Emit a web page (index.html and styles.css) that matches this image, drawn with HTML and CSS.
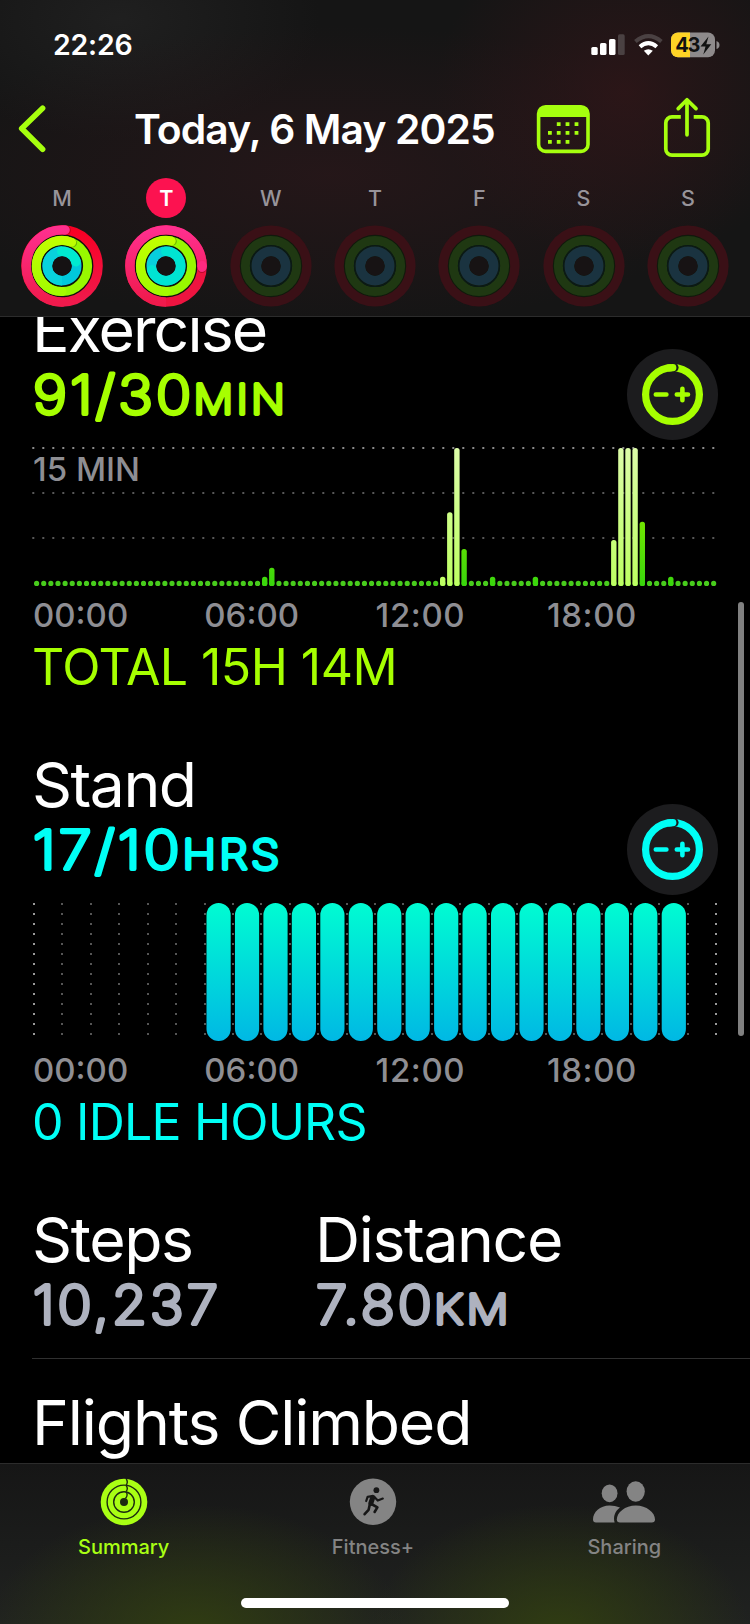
FILE: index.html
```html
<!DOCTYPE html>
<html lang="en">
<head>
<meta charset="utf-8">
<title>Fitness</title>
<link rel="stylesheet" href="styles.css">
</head>
<body>
<svg class="defs" width="0" height="0" aria-hidden="true">
  <defs>
    <linearGradient id="redBase" x1="0" y1="0" x2="0" y2="1"><stop offset="0" stop-color="#f80024"/><stop offset="1" stop-color="#f01a4c"/></linearGradient>
    <linearGradient id="redLap" x1="0" y1="0" x2="0" y2="1"><stop offset="0" stop-color="#ff2f8e"/><stop offset="1" stop-color="#f01a4c"/></linearGradient>
    <linearGradient id="greenLap" x1="0" y1="0" x2="0" y2="1"><stop offset="0" stop-color="#c0ff00"/><stop offset="1" stop-color="#a4fb00"/></linearGradient>
    <g id="dimRings" fill="none">
      <circle cx="41" cy="41" r="40.6" fill="#3a1016"/>
      <circle cx="41" cy="41" r="31.2" fill="#101a0c"/>
      <circle cx="41" cy="41" r="25.6" stroke="#1f3812" stroke-width="9"/>
      <circle cx="41" cy="41" r="20.4" stroke="#0b1a16" stroke-width="1.4"/>
      <circle cx="41" cy="41" r="14.6" stroke="#1a3340" stroke-width="9.8"/>
      <circle cx="41" cy="41" r="9.7" fill="#171314"/>
    </g>
  </defs>
</svg>
<div class="phone">
  <header class="header">
    <div class="status">
      <span class="status-time">22:26</span>
      <svg class="status-icons" width="130" height="28" viewBox="590 31 130 28">
        <g fill="#fff"><rect x="591.3" y="47" width="6.4" height="8" rx="1.6"/><rect x="600" y="43" width="6.5" height="12" rx="1.6"/><rect x="609" y="39" width="6.5" height="16" rx="1.6"/></g>
        <rect x="618" y="34.3" width="6.7" height="20.7" rx="1.6" fill="#4a4142"/>
        <g fill="none" stroke="#fff" stroke-width="4">
          <path stroke="#4a4142" d="M635.4 41.5Q648.5 30.8 661.4 41.5"/>
          <path d="M640 46.7Q648.3 39.6 656.8 46.7"/>
        </g>
        <path fill="#fff" d="M643.8 50.8Q648.3 47.6 652.8 50.8L648.3 55.4Z"/>
        <rect x="671" y="32.4" width="44" height="24.8" rx="7" fill="#8e8a8b"/>
        <path fill="#ffd426" d="M690 32.4H678a7 7 0 0 0-7 7v10.8a7 7 0 0 0 7 7h12z"/>
        <path fill="#8e8a8b" d="M716.5 41q3 1 3 4t-3 4z"/>
        <text x="675.3" y="52" class="battery-text" textLength="25">43</text>
        <path d="M708.5 36.5L700.5 46.6h5l-2.2 7.9 8-10.2h-5z" fill="#111"/>
      </svg>
    </div>
    <div class="nav">
      <svg class="nav-back" width="34" height="52" viewBox="14 103 34 52"><path d="M43.6 108.3L22.7 128.6L43.6 149.2" fill="none" stroke="#a6ff0e" stroke-width="5.6" stroke-linecap="round" stroke-linejoin="round"/></svg>
      <h1 class="nav-title">Today, 6 May 2025</h1>
      <svg class="nav-cal" width="54" height="50" viewBox="536.2 104 54 50">
        <rect x="538.8" y="106.8" width="49.4" height="44.6" rx="7" fill="none" stroke="#a6ff0e" stroke-width="3.6"/>
        <path d="M538 117v-3a8 8 0 0 1 8-8h35a8 8 0 0 1 8 8v3z" fill="#a6ff0e"/>
        <g fill="#a6ff0e"><path d="M557 122.2h3.8v3.8h-3.8zM565.8 122.2h3.8v3.8h-3.8zM574.8 122.2h3.8v3.8h-3.8zM548.2 131h3.8v3.8h-3.8zM557 131h3.8v3.8h-3.8zM565.8 131h3.8v3.8h-3.8zM574.8 131h3.8v3.8h-3.8zM548.2 140h3.8v3.8h-3.8zM557 140h3.8v3.8h-3.8zM565.8 140h3.8v3.8h-3.8z"/></g>
      </svg>
      <svg class="nav-share" width="50" height="62" viewBox="662 97 50 62" fill="none" stroke="#a6ff0e" stroke-width="3.7" stroke-linecap="round" stroke-linejoin="round">
        <path stroke-linecap="butt" d="M680.8 116.8H672a6.2 6.2 0 0 0-6.2 6.2v26a6.2 6.2 0 0 0 6.2 6.2h30a6.2 6.2 0 0 0 6.2-6.2v-26a6.2 6.2 0 0 0-6.2-6.2h-8.3"/>
        <path d="M687 134.8V100.5M678.2 108.6L687 99.8L696 108.6"/>
      </svg>
    </div>
    <div class="week">
      <div class="day"><span class="day-name">M</span>
        <svg width="82" height="82" viewBox="0 0 82 82" fill="none">
          <circle cx="41" cy="41" r="31.6" fill="#10120c"/>
          <circle cx="41" cy="41" r="36.1" stroke="url(#redBase)" stroke-width="9.4"/>
          <circle cx="45.4" cy="5.3" r="4.5" fill="#9a0018" opacity=".5"/>
          <path d="M41 77.1A36.1 36.1 0 1 1 44.1 5" stroke="url(#redLap)" stroke-width="9.4" stroke-linecap="round"/>
          <circle cx="41" cy="41" r="25.6" stroke="#98f800" stroke-width="9"/>
          <circle cx="51.8" cy="17.9" r="4.3" fill="#4a8000" opacity=".5"/>
          <path d="M41 66.6A25.6 25.6 0 1 1 50.6 17.3" stroke="url(#greenLap)" stroke-width="9" stroke-linecap="round"/>
          <circle cx="41" cy="41" r="14.6" stroke="#00c8dc" stroke-width="9.8"/>
          <path d="M41 55.6A14.6 14.6 0 0 1 41 26.4" stroke="#08d2dc" stroke-width="9.8"/>
          <path d="M41 26.4A14.6 14.6 0 0 1 54.9 36.5" stroke="#00ead0" stroke-width="9.8" stroke-linecap="round"/>
          <circle cx="41" cy="41" r="9.7" fill="#151213"/>
        </svg></div>
      <div class="day"><span class="day-name day-today">T</span>
        <svg width="82" height="82" viewBox="0 0 82 82" fill="none">
          <circle cx="41" cy="41" r="31.6" fill="#10120c"/>
          <circle cx="41" cy="41" r="36.1" stroke="#ee1440" stroke-width="9.4"/>
          <circle cx="76.9" cy="43.6" r="4.5" fill="#8a0018" opacity=".5"/>
          <path d="M41 77.1A36.1 36.1 0 1 1 77.05 42.2" stroke="url(#redLap)" stroke-width="9.4"/>
          <path d="M77 40.600L77.05 42.2" stroke="#ff2a80" stroke-width="9.4" stroke-linecap="round"/>
          <circle cx="41" cy="41" r="25.6" stroke="#98f800" stroke-width="9"/>
          <circle cx="47.6" cy="16.2" r="4.3" fill="#4a8000" opacity=".5"/>
          <path d="M41 66.6A25.6 25.6 0 1 1 46.2 15.9" stroke="url(#greenLap)" stroke-width="9" stroke-linecap="round"/>
          <circle cx="41" cy="41" r="14.6" stroke="#08cfdc" stroke-width="9.8"/>
          <path d="M41 26.4A14.6 14.6 0 1 1 26.9 45" stroke="#00e4d2" stroke-width="9.8" stroke-linecap="round"/>
          <circle cx="41" cy="41" r="9.7" fill="#151213"/>
        </svg></div>
      <div class="day"><span class="day-name">W</span><svg width="82" height="82"><use href="#dimRings"/></svg></div>
      <div class="day"><span class="day-name">T</span><svg width="82" height="82"><use href="#dimRings"/></svg></div>
      <div class="day"><span class="day-name">F</span><svg width="82" height="82"><use href="#dimRings"/></svg></div>
      <div class="day"><span class="day-name">S</span><svg width="82" height="82"><use href="#dimRings"/></svg></div>
      <div class="day"><span class="day-name">S</span><svg width="82" height="82"><use href="#dimRings"/></svg></div>
    </div>
  </header>

  <main class="content">
    <section class="metric exercise">
      <h2 class="title t-exercise">Exercise</h2>
      <div class="value-row">
        <svg class="value" width="300" height="65"><text class="num" x="1" y="51.9" textLength="161.5" lengthAdjust="spacingAndGlyphs">91/30</text><text class="unit" x="161.5" y="51.9" textLength="94.5" lengthAdjust="spacingAndGlyphs">MIN</text></svg>
        <svg class="adjust" width="91" height="91" viewBox="0 0 91 91" fill="none" stroke="currentColor">
          <circle cx="45.5" cy="45.5" r="45.5" fill="#1c1c1e" stroke="none"/>
          <circle cx="45.5" cy="45.5" r="26.9" stroke-width="7.2"/>
          <circle cx="47.2" cy="18.6" r="4.4" fill="#1c1c1e" stroke="none"/>
          <path d="M42 18.8L45.8 18.6" stroke-width="7.2" stroke-linecap="round"/>
          <path d="M28.8 45.5H39.4M49.8 45.5H61M55.4 39.8V51.2" stroke-width="4.6" stroke-linecap="round"/>
        </svg>
      </div>
      <div class="chart">
        <svg width="686" height="146" viewBox="32 444 686 146">
          <defs>
            <linearGradient id="pale" gradientUnits="userSpaceOnUse" x1="0" y1="448" x2="0" y2="586"><stop offset="0" stop-color="#dcfca8"/><stop offset="1" stop-color="#bdff62"/></linearGradient>
            <linearGradient id="vivid" gradientUnits="userSpaceOnUse" x1="0" y1="520" x2="0" y2="586"><stop offset="0" stop-color="#72e600"/><stop offset="1" stop-color="#38d60c"/></linearGradient>
          </defs>
          <g stroke-width="2" stroke-dasharray="2 8"><path d="M32.3 448H716" stroke="#8c8c8c"/><path d="M32.3 493H716M32.3 538H716" stroke="#585858"/></g>
          <path d="M36.6 583.4H713.8" stroke="#48cc1c" stroke-width="5.2" stroke-linecap="round" stroke-dasharray="0 7.127"/>
          <g fill="url(#vivid)">
            <rect x="262" y="576.7" width="5.4" height="9.3" rx="2.5"/><rect x="269.1" y="567.7" width="5.4" height="18.3" rx="2.5"/>
            <rect x="461.4" y="549" width="5.4" height="37" rx="2.5"/><rect x="489.9" y="576.7" width="5.4" height="9.3" rx="2.5"/>
            <rect x="532.7" y="576.7" width="5.4" height="9.3" rx="2.5"/><rect x="639.6" y="521.7" width="5.4" height="64.3" rx="2.5"/>
            <rect x="668.1" y="576.7" width="5.4" height="9.3" rx="2.5"/>
          </g>
          <g fill="url(#pale)">
            <rect x="440" y="576.7" width="5.4" height="9.3" rx="2.5"/><rect x="447.1" y="512.3" width="5.4" height="73.7" rx="2.5"/><rect x="454.2" y="448" width="5.4" height="138" rx="2.5"/>
            <rect x="611.1" y="540" width="5.4" height="46" rx="2.5"/><rect x="618.2" y="448" width="5.4" height="138" rx="2.5"/><rect x="625.3" y="448" width="5.4" height="138" rx="2.5"/><rect x="632.4" y="448" width="5.4" height="138" rx="2.5"/>
          </g>
        </svg>
        <span class="scale">15 MIN</span>
      </div>
      <div class="axis"><span>00:00</span><span>06:00</span><span>12:00</span><span>18:00</span></div>
      <p class="note n-total">TOTAL 15H 14M</p>
    </section>

    <section class="metric stand">
      <h2 class="title t-stand">Stand</h2>
      <div class="value-row">
        <svg class="value" width="300" height="65"><text class="num" x="1" y="51.9" textLength="149.7" lengthAdjust="spacingAndGlyphs">17/10</text><text class="unit" x="150.5" y="51.9" textLength="100" lengthAdjust="spacingAndGlyphs">HRS</text></svg>
        <svg class="adjust" width="91" height="91" viewBox="0 0 91 91" fill="none" stroke="currentColor">
          <circle cx="45.5" cy="45.5" r="45.5" fill="#1c1c1e" stroke="none"/>
          <circle cx="45.5" cy="45.5" r="26.9" stroke-width="7.2"/>
          <circle cx="47.2" cy="18.6" r="4.4" fill="#1c1c1e" stroke="none"/>
          <path d="M42 18.8L45.8 18.6" stroke-width="7.2" stroke-linecap="round"/>
          <path d="M28.8 45.5H39.4M49.8 45.5H61M55.4 39.8V51.2" stroke-width="4.6" stroke-linecap="round"/>
        </svg>
      </div>
      <div class="chart">
        <svg width="686" height="146" viewBox="32 899 686 146">
          <defs>
            <linearGradient id="cyan" x1="0" y1="0" x2="0" y2="1"><stop offset="0" stop-color="#00fcd2"/><stop offset="1" stop-color="#00b8e4"/></linearGradient>
            <rect id="hour" y="903" width="24.2" height="138" rx="12.1" fill="url(#cyan)"/>
          </defs>
          <g stroke-width="2" stroke-dasharray="2 8">
            <path stroke="#9a9a9a" d="M34 903V1036M716 903V1036"/>
            <path stroke="#555" d="M62 903V1036M91 903V1036M119 903V1036M148 903V1036M176 903V1036M205 903V1036M233 903V1036M261 903V1036M290 903V1036M318 903V1036M347 903V1036M375 903V1036M403 903V1036M432 903V1036M460 903V1036M489 903V1036M517 903V1036M546 903V1036M574 903V1036M602 903V1036M631 903V1036M659 903V1036M688 903V1036"/>
          </g>
          <use href="#hour" x="206.5"/><use href="#hour" x="234.95"/><use href="#hour" x="263.4"/><use href="#hour" x="291.8"/><use href="#hour" x="320.3"/><use href="#hour" x="348.7"/><use href="#hour" x="377.2"/><use href="#hour" x="405.6"/><use href="#hour" x="434.1"/><use href="#hour" x="462.5"/><use href="#hour" x="491"/><use href="#hour" x="519.4"/><use href="#hour" x="547.9"/><use href="#hour" x="576.3"/><use href="#hour" x="604.8"/><use href="#hour" x="633.2"/><use href="#hour" x="661.7"/>
        </svg>
      </div>
      <div class="axis"><span>00:00</span><span>06:00</span><span>12:00</span><span>18:00</span></div>
      <p class="note n-idle">0 IDLE HOURS</p>
    </section>

    <section class="totals">
      <div class="total">
        <h2 class="title t-steps">Steps</h2>
        <svg class="value" width="240" height="65"><text class="num" x="1" y="52.2" textLength="188" lengthAdjust="spacingAndGlyphs">10,237</text></svg>
      </div>
      <div class="total">
        <h2 class="title t-distance">Distance</h2>
        <svg class="value" width="240" height="65"><text class="num" x="1" y="52.2" textLength="119" lengthAdjust="spacingAndGlyphs">7.80</text><text class="unit" x="119" y="52.2" textLength="78" lengthAdjust="spacingAndGlyphs">KM</text></svg>
      </div>
    </section>
    <section class="flights"><h2 class="title t-flights">Flights Climbed</h2></section>
  </main>

  <nav class="tabs">
    <div class="tab tab-active">
      <svg width="64" height="48" viewBox="0 0 64 48" fill="none">
        <circle cx="32" cy="24" r="23.3" fill="#a9ff14"/>
        <g stroke="#1c2b10" stroke-width="1.4"><circle cx="32" cy="24" r="16.9"/><circle cx="32" cy="24" r="10.3"/></g>
        <circle cx="32" cy="24" r="4" fill="#1c2b10"/>
        <path d="M34.2 1q2.2 3 0 6M34.2 7.5q2.2 3 0 6M34.2 14q2.2 3-.8 6.5" stroke="#1c2b10" stroke-width="1.4"/>
      </svg>
      <span>Summary</span>
    </div>
    <div class="tab">
      <svg width="64" height="48" viewBox="0 0 64 48" fill="none">
        <circle cx="32" cy="23.8" r="23.2" fill="#848484"/>
        <g stroke="#161616" stroke-width="2.2" stroke-linecap="round" stroke-linejoin="round">
          <circle cx="35.4" cy="12.2" r="2.9" fill="#161616" stroke="none"/>
          <path d="M31 18.2L26.6 18.8L25.2 23M33.6 19.2L36.8 22.6L41.8 20.6"/>
          <path d="M31.8 19.4L29.8 25.4" stroke-width="5"/>
          <path d="M30.4 26L36.4 29.4L33.6 34M28.6 27.4L27.6 31.8L23.6 36.2" stroke-width="2.6"/>
        </g>
      </svg>
      <span>Fitness+</span>
    </div>
    <div class="tab">
      <svg width="64" height="48" viewBox="593 1477.5 64 48" fill="#848484">
        <ellipse cx="610.6" cy="1492.8" rx="7.9" ry="8.9"/><ellipse cx="636.7" cy="1491" rx="9.1" ry="10.2"/>
        <path d="M621 1507Q616 1505 610.5 1505C601 1505 594 1511.5 594 1519Q594 1522 597 1522H615.6C614 1516 616 1510.8 621 1507Z"/>
        <path d="M636.8 1505C626 1505 617.8 1512 617.8 1519Q617.8 1522 621 1522H652.8Q656 1522 656 1519C656 1512 647.5 1505 636.8 1505Z"/>
      </svg>
      <span>Sharing</span>
    </div>
    <div class="home-bar"></div>
  </nav>
  <div class="scrollbar"></div>
</div>
</body>
</html>
```
FILE: styles.css
```css
* { box-sizing: border-box; margin: 0; padding: 0; }
body { background: #000; font-family: Inter, "Noto Sans", sans-serif; color: #fff; }
svg { display: block; }
.defs { position: absolute; }
.phone { position: relative; width: 750px; height: 1624px; display: flex; flex-direction: column; overflow: hidden; background: #000; }

.header {
  flex: none; height: 317px; border-bottom: 1px solid #2c2c2c; position: relative; z-index: 1;
  background:
    radial-gradient(ellipse 190px 170px at 625px 92px, rgba(54, 22, 25, .65), transparent),
    radial-gradient(ellipse 420px 150px at 330px 175px, rgba(42, 23, 26, .75), transparent),
    radial-gradient(ellipse 200px 120px at 120px 20px, rgba(34, 34, 34, .8), transparent),
    #151515;
}
.status { display: flex; justify-content: space-between; align-items: center; height: 90px; padding: 0 30px 0 53px; }
.status-time { font-size: 28.5px; font-weight: 600; line-height: 40px; letter-spacing: -.2px; }
.battery-text { font: 700 20px Inter, sans-serif; fill: #111; }
.nav { display: flex; align-items: center; height: 78px; padding-left: 13px; }
.nav-title { font-size: 40.8px; font-weight: 600; line-height: 50px; letter-spacing: -.9px; margin-left: 87px; width: 401.5px; white-space: nowrap; }
.nav-share { margin: 0 0 2px 72.5px; }
.week { display: flex; padding: 0 10px; height: 148px; }
.day { flex: 1; display: flex; flex-direction: column; align-items: center; gap: 7px; padding-top: 10px; }
.day-name { width: 40px; height: 40px; border-radius: 50%; text-align: center; line-height: 41px; font-size: 21.5px; font-weight: 500; color: #98949a; }
.day-today { background: #fc1250; color: #fff; font-weight: 600; }

.content { flex: 1; min-height: 0; padding-left: 32px; margin-top: -20px; overflow: hidden; }
.title { height: 65px; line-height: 65px; font-size: 62.5px; font-weight: 400; white-space: nowrap; }
.t-exercise { letter-spacing: -1.9px; }
.t-stand { letter-spacing: -1.5px; }
.t-steps, .t-distance { letter-spacing: -1.4px; }
.t-flights { letter-spacing: -1.15px; }
.metric { height: 455px; width: 686px; }
.exercise { color: #a6ff00; }
.stand { color: #00fff6; }
.metric .title { color: #fff; }
.value-row { display: flex; justify-content: space-between; align-items: center; height: 65px; }
.value { overflow: visible; }
.value text { font-family: Inter, sans-serif; fill: currentColor; stroke: currentColor; stroke-linejoin: round; stroke-linecap: round; }
.num { font-size: 53.5px; font-weight: 200; stroke-width: 4px; letter-spacing: 3px; }
.unit { font-size: 41px; font-weight: 200; stroke-width: 3.8px; letter-spacing: 3px; }
.chart { position: relative; margin-top: 17px; height: 146px; }
.scale { position: absolute; left: 1px; top: 5px; line-height: 41px; font-size: 33px; font-weight: 550; color: #8e8e93; }
.axis { display: grid; grid-template-columns: repeat(4, 171.3px); padding-left: 1px; margin-top: 8px; line-height: 34px; font-size: 33px; font-weight: 550; color: #8e8e93; }
.axis span:nth-child(n+3) { letter-spacing: .6px; }
.note { margin-top: 5px; line-height: 60px; font-size: 50px; font-weight: 400; white-space: nowrap; }
.n-total { letter-spacing: -.55px; }
.n-idle { letter-spacing: -.8px; }
.totals { display: grid; grid-template-columns: 283px 1fr; height: 152px; border-bottom: 1px solid #303030; color: #aeb2bf; }
.totals .title { color: #fff; }
.flights { padding-top: 31px; }

.tabs {
  position: relative; flex: none; height: 161px; display: flex; border-top: 1px solid #2c2c2c; z-index: 1;
  background:
    radial-gradient(ellipse 210px 130px at 195px 170px, rgba(50, 64, 16, .9), transparent),
    radial-gradient(ellipse 190px 130px at 560px 170px, rgba(50, 64, 16, .9), transparent),
    linear-gradient(#161616, #202220);
}
.tab { flex: 1; display: flex; flex-direction: column; align-items: center; padding: 13.5px 2px 0 0; color: #848484; font-size: 20px; font-weight: 500; line-height: 24px; gap: 9px; }
.tab:nth-child(2) { padding-right: 4px; }
.tab-active { color: #a9ff14; }
.home-bar { position: absolute; left: 241px; top: 134px; width: 268px; height: 10px; border-radius: 5px; background: #fff; }
.scrollbar { position: absolute; z-index: 2; left: 738px; top: 602px; width: 6px; height: 434px; border-radius: 3px; background: #808080; }
```
